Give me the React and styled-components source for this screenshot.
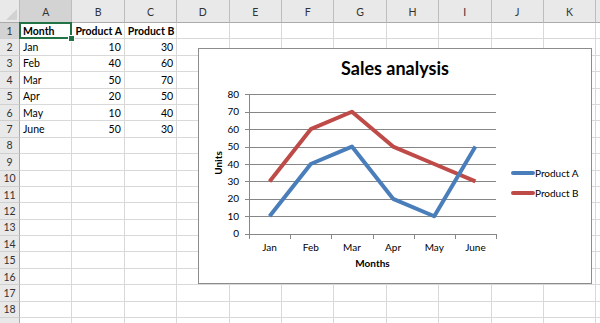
import styled, { createGlobalStyle } from 'styled-components';

const GlobalStyle = createGlobalStyle`
  html, body { margin: 0; padding: 0; background: #fff; }
  body { font-family: Lato, "Liberation Sans", sans-serif; overflow: hidden; }
`

const COLS = ['A', 'B', 'C', 'D', 'E', 'F', 'G', 'H', 'I', 'J', 'K', '']
const ROWS = 19
const data = [
  ['Month', 'Product A', 'Product B'],
  ['Jan', 10, 30],
  ['Feb', 40, 60],
  ['Mar', 50, 70],
  ['Apr', 20, 50],
  ['May', 10, 40],
  ['June', 50, 30],
]

function App() {
  return (
    <>
      <GlobalStyle />
      <Sheet>
        <Corner>
          <svg width="12" height="12" viewBox="0 0 12 12"><polygon points="12,1 12,12 1,12" fill="#d2d2d2" /></svg>
        </Corner>
        {COLS.map((c, i) => <ColHead key={c + i} $sel={c === 'A'}>{c}</ColHead>)}
        {Array.from({ length: ROWS }).map((_, r) => (
          <Row key={r} r={r} />
        ))}
        <Chart />
      </Sheet>
    </>
  )
}

function Row({ r }) {
  const row = data[r] || []
  return (
    <>
      {/* last row is only partly in view, its number is hidden below the edge */}
      <RowHead $sel={r === 0}>{r < 18 ? r + 1 : ''}</RowHead>
      {COLS.map((c, i) => {
        const v = row[i]
        return (
          <Cell key={i} $num={typeof v === 'number'} $bold={r === 0} $active={r === 0 && i === 0}>
            {v}
          </Cell>
        )
      })}
    </>
  )
}

const A = [10, 40, 50, 20, 10, 50]
const B = [30, 60, 70, 50, 40, 30]
const months = ['Jan', 'Feb', 'Mar', 'Apr', 'May', 'June']

const X0 = 50, X1 = 297, Y0 = 146.7, K = 1.7425
const cw = (X1 - X0) / 6
const px = i => X0 + cw / 2 + i * cw
const py = v => Y0 - v * K
const pts = arr => arr.map((v, i) => `${px(i)},${py(v)}`).join(' ')

function Chart() {
  return (
    <ChartBox>
      <Title>Sales analysis</Title>
      <ChartBody>
        <svg width="306" height="195" viewBox="0 0 306 195">
          {[0, 10, 20, 30, 40, 50, 60, 70, 80].map(v => (
            <g key={v}>
              <line x1={46} x2={X1} y1={Math.round(py(v)) + 0.5} y2={Math.round(py(v)) + 0.5} stroke="#868686" />
              <AxisText x={40} y={py(v) + 3.5} textAnchor="end">{v}</AxisText>
            </g>
          ))}
          <line x1={X0 + 0.5} x2={X0 + 0.5} y1={Math.round(py(80))} y2={Math.round(Y0) + 1} stroke="#868686" />
          {[0, 1, 2, 3, 4, 5, 6].map(i => (
            <line key={i} x1={Math.round(X0 + i * cw) + 0.5} x2={Math.round(X0 + i * cw) + 0.5} y1={Math.round(Y0)} y2={Math.round(Y0) + 5} stroke="#868686" />
          ))}
          {months.map((m, i) => (
            <AxisText key={m} x={px(i)} y={164} textAnchor="middle">{m}</AxisText>
          ))}
          <AxisTitle x={(X0 + X1) / 2} y={180} textAnchor="middle">Months</AxisTitle>
          <AxisTitle x={0} y={0} textAnchor="middle" transform="translate(23 76) rotate(-90)">Units</AxisTitle>
          <polyline points={pts(B)} fill="none" stroke="#be4b48" strokeWidth="4" strokeLinejoin="round" />
          <polyline points={pts(A)} fill="none" stroke="#4a7ebb" strokeWidth="4" strokeLinejoin="round" />
        </svg>
        <Legend>
          <LegendItem><LegendLine $color="#4a7ebb" />Product A</LegendItem>
          <LegendItem><LegendLine $color="#be4b48" />Product B</LegendItem>
        </Legend>
      </ChartBody>
    </ChartBox>
  )
}

export default App

const Sheet = styled.div`
  position: relative;
  display: grid;
  grid-template-columns: 20px repeat(11, 52.4px) 1fr;
  grid-template-rows: 23px repeat(19, 16.4px);
  width: 600px;
  height: 323px;
  overflow: hidden;
  font-size: 10.5px;
  color: #000;
`
const Corner = styled.div`
  background: #e9e9e9;
  border-right: 1px solid #bdbdbd;
  border-bottom: 1px solid #ababab;
  box-sizing: border-box;
  display: flex;
  align-items: flex-end;
  justify-content: flex-end;
  padding: 0 2px 2px 0;
`
const ColHead = styled.div`
  box-sizing: border-box;
  background: ${p => (p.$sel ? '#d3d3d3' : '#e9e9e9')};
  border-right: 1px solid #bdbdbd;
  border-bottom: 1px solid #ababab;
  display: flex;
  align-items: center;
  justify-content: center;
  padding-top: 2px;
  color: #333;
  font-size: 10.5px;
`
const RowHead = styled.div`
  box-sizing: border-box;
  background: ${p => (p.$sel ? '#d3d3d3' : '#e9e9e9')};
  border-right: 1px solid #ababab;
  border-bottom: 1px solid #d0d0d0;
  display: flex;
  align-items: center;
  justify-content: center;
  color: #333;
  font-size: 10.5px;
`
const Cell = styled.div`
  position: relative;
  box-sizing: border-box;
  border-right: 1px solid #d9d9d9;
  border-bottom: 1px solid #d9d9d9;
  display: flex;
  align-items: center;
  justify-content: ${p => (p.$num ? 'flex-end' : 'flex-start')};
  padding: 0 3px;
  font-weight: ${p => (p.$bold ? 700 : 400)};
  white-space: nowrap;
  overflow: visible;
  ${p => p.$active && `
    &::after {
      content: '';
      position: absolute;
      left: -1px; top: -1px; right: -1px; bottom: -1px;
      border: 2px solid #217346;
    }
    &::before {
      content: '';
      position: absolute;
      right: -4px; bottom: -4px;
      width: 5px; height: 5px;
      background: #217346;
      border: 1px solid #fff;
      z-index: 1;
    }
  `}
`
const ChartBox = styled.div`
  position: absolute;
  left: 198px;
  top: 48px;
  width: 394px;
  height: 236px;
  box-sizing: border-box;
  background: #fff;
  border: 1px solid #8c8c8c;
  display: flex;
  flex-direction: column;
  z-index: 2;
`
const Title = styled.div`
  height: 38px;
  display: flex;
  align-items: center;
  justify-content: center;
  font-size: 18px;
  font-weight: 700;
  color: #000;
`
const ChartBody = styled.div`
  display: flex;
  align-items: center;
  & > svg { flex: none; display: block; }
`
const AxisText = styled.text`
  font-family: Lato, "Liberation Sans", sans-serif;
  font-size: 10px;
  fill: #000;
`
const AxisTitle = styled.text`
  font-family: Lato, "Liberation Sans", sans-serif;
  font-size: 10px;
  font-weight: 700;
  fill: #000;
`
const Legend = styled.div`
  display: flex;
  flex-direction: column;
  gap: 7px;
  padding-left: 6px;
  margin-bottom: 4px;
  font-size: 10px;
`
const LegendItem = styled.div`
  display: flex;
  align-items: center;
  height: 13px;
`
const LegendLine = styled.span`
  width: 24px;
  height: 4px;
  border-radius: 2px;
  background: ${p => p.$color};
`
